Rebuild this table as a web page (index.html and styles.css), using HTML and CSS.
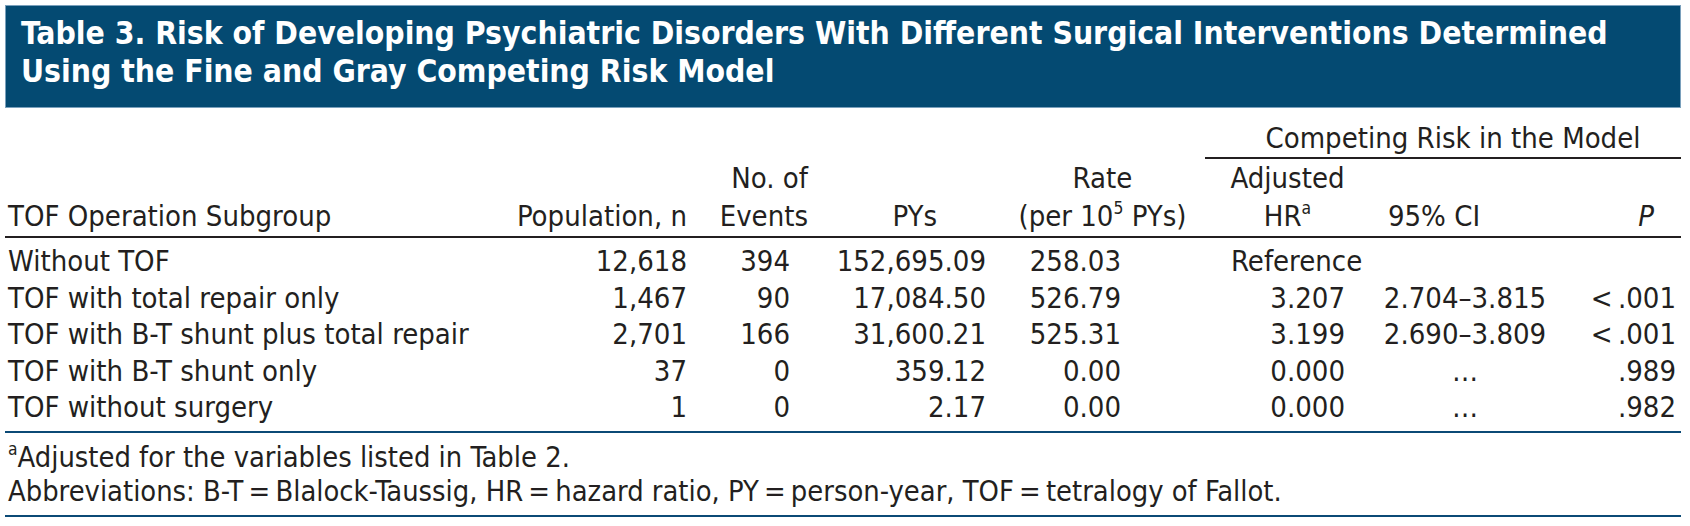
FILE: index.html
```html
<!DOCTYPE html>
<html lang="en">
<head>
<meta charset="utf-8">
<title>Table 3</title>
<link rel="stylesheet" href="styles.css">
</head>
<body>
<div class="page">
  <div class="title-bar">
    <h1 class="title">Table 3. Risk of Developing Psychiatric Disorders With Different Surgical Interventions Determined<br>Using the Fine and Gray Competing Risk Model</h1>
  </div>
  <table class="data">
    <colgroup>
      <col class="w-label"><col class="w-pop"><col class="w-ev"><col class="w-py"><col class="w-rate"><col class="w-hr"><col class="w-ci"><col class="w-p">
    </colgroup>
    <thead>
      <tr class="group-row">
        <th colspan="5" class="blank"></th>
        <th colspan="3" class="group">Competing Risk in the Model</th>
      </tr>
      <tr class="head-row">
        <th class="label">TOF Operation Subgroup</th>
        <th class="pop">Population, n</th>
        <th class="ev-h">No. of<br>Events</th>
        <th class="py-h">PYs</th>
        <th class="rate-h">Rate<br>(per 10<sup>5</sup> PYs)</th>
        <th class="hr-h">Adjusted<br>HR<sup>a</sup></th>
        <th class="ci-h">95% CI</th>
        <th class="p-h"><i>P</i></th>
      </tr>
    </thead>
    <tbody>
      <tr>
        <td class="label">Without TOF</td><td class="pop">12,618</td><td class="ev">394</td><td class="py">152,695.09</td><td class="rate">258.03</td><td class="hr-ref">Reference</td><td class="ci"></td><td class="p"></td>
      </tr>
      <tr>
        <td class="label">TOF with total repair only</td><td class="pop">1,467</td><td class="ev">90</td><td class="py">17,084.50</td><td class="rate">526.79</td><td class="hr">3.207</td><td class="ci">2.704–3.815</td><td class="p">&lt;&thinsp;.001</td>
      </tr>
      <tr>
        <td class="label">TOF with B-T shunt plus total repair</td><td class="pop">2,701</td><td class="ev">166</td><td class="py">31,600.21</td><td class="rate">525.31</td><td class="hr">3.199</td><td class="ci">2.690–3.809</td><td class="p">&lt;&thinsp;.001</td>
      </tr>
      <tr>
        <td class="label">TOF with B-T shunt only</td><td class="pop">37</td><td class="ev">0</td><td class="py">359.12</td><td class="rate">0.00</td><td class="hr">0.000</td><td class="ci">…</td><td class="p">.989</td>
      </tr>
      <tr>
        <td class="label">TOF without surgery</td><td class="pop">1</td><td class="ev">0</td><td class="py">2.17</td><td class="rate">0.00</td><td class="hr">0.000</td><td class="ci">…</td><td class="p">.982</td>
      </tr>
    </tbody>
  </table>
  <div class="notes">
    <p class="note"><sup>a</sup>Adjusted for the variables listed in Table 2.</p>
    <p class="note">Abbreviations: B-T&thinsp;=&thinsp;Blalock-Taussig, HR&thinsp;=&thinsp;hazard ratio, PY&thinsp;=&thinsp;person-year, TOF&thinsp;=&thinsp;tetralogy of Fallot.</p>
  </div>
</div>
</body>
</html>
```

FILE: styles.css
```css
* { box-sizing: border-box; }
html, body { margin: 0; padding: 0; background: #ffffff; }
body {
  font-family: "DejaVu Sans Condensed", "DejaVu Sans", sans-serif;
  font-stretch: condensed;
  color: #231f20;
}
.page {
  width: 1676px;
  margin: 5px 0 0 5px;
}
.title-bar {
  background: #044a72;
  border: 1px solid #7aa0bc;
  height: 103px;
  padding: 8px 0 0 15px;
}
.title {
  margin: 0;
  color: #ffffff;
  font-size: 31.6px;
  font-weight: bold;
  line-height: 38px;
  white-space: nowrap;
}
.data {
  width: 1676px;
  border-collapse: collapse;
  table-layout: fixed;
  font-size: 29px;
}
.w-label { width: 485px; }
.w-pop { width: 210px; }
.w-ev { width: 120px; }
.w-py { width: 180px; }
.w-rate { width: 205px; }
.w-hr { width: 165px; }
.w-ci { width: 190px; }
.w-p { width: 121px; }
.data th, .data td {
  padding: 0;
  font-weight: normal;
  white-space: nowrap;
}
.data th { vertical-align: bottom; line-height: 38px; }
.group-row th { padding-top: 11px; }
.group-row .group {
  border-bottom: 2px solid #231f20;
  text-align: center;
  padding-left: 20px;
}
.head-row th { border-bottom: 2px solid #231f20; padding-bottom: 1px; }
.data sup { font-size: 0.6em; line-height: 0; vertical-align: 0.7em; }
.data td { line-height: 36.6px; }
.data tbody tr:first-child td { padding-top: 5px; }
.data tbody tr:last-child td { padding-bottom: 5px; border-bottom: 2px solid #0b4a76; }
.label { text-align: left; padding-left: 3px !important; }
.pop { text-align: right; padding-right: 13px !important; }
.ev-h { text-align: right; padding-right: 12px !important; }
.ev { text-align: right; padding-right: 30px !important; }
.py-h { text-align: right; padding-right: 63px !important; }
.py { text-align: right; padding-right: 14px !important; }
.rate-h { text-align: center; }
.rate { text-align: right; padding-right: 84px !important; }
.hr-h { text-align: center; }
.hr-ref { text-align: left; padding-left: 26px !important; }
.hr { text-align: right; padding-right: 25px !important; }
.ci-h { text-align: center; padding-right: 62px !important; }
.ci { text-align: center; }
.p-h { text-align: right; padding-right: 27px !important; }
.p { text-align: right; padding-right: 5px !important; }
.notes {
  padding: 7px 0 6px 3px;
  border-bottom: 2px solid #0b4a76;
}
.note {
  margin: 0;
  font-size: 28.8px;
  line-height: 34.5px;
  white-space: nowrap;
}
.note sup { font-size: 0.6em; line-height: 0; vertical-align: 0.7em; }
```
